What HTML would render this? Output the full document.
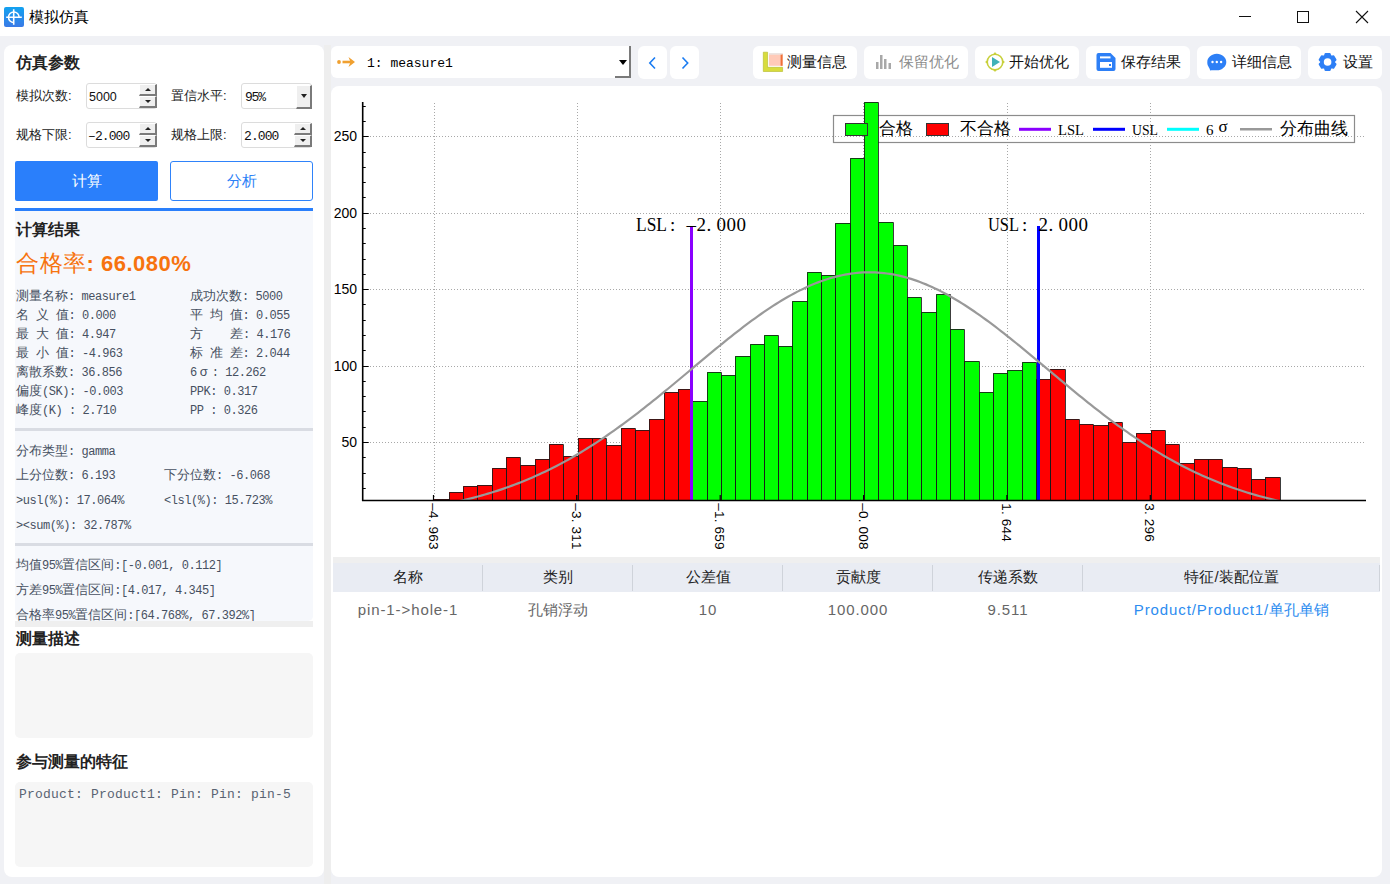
<!DOCTYPE html>
<html><head><meta charset="utf-8">
<style>
*{box-sizing:border-box}
html,body{margin:0;padding:0}
body{width:1390px;height:884px;overflow:hidden;position:relative;background:#f0f1f5;font-family:"Liberation Sans",sans-serif;color:#000}
.a{position:absolute}
.t{position:absolute;white-space:pre;line-height:1}
.chart{position:absolute;left:0;top:0}
.chart text{font-family:"Liberation Sans",sans-serif}
.yl{font-size:14px;fill:#000}
.xl{font-size:13.5px;fill:#000}
.lim{font-family:"Liberation Serif",serif !important;font-size:19px;fill:#000}
.lg{font-size:16.5px;fill:#000}
.lgs{font-family:"Liberation Serif",serif !important;font-size:15px;fill:#000}
/* left panel */
.m{font-family:"Liberation Mono",monospace;font-size:12px;letter-spacing:-0.45px;color:#465061}
.m b{font-weight:normal;font-family:"Liberation Sans",sans-serif;font-size:13px;letter-spacing:0}
.lbl{font-size:13px;color:#222}
.hd{font-size:15.5px;font-weight:bold;color:#222}
.spin{position:absolute;background:#fff;border:1px solid #dcdcdc;border-radius:3px}
.sbtn{position:absolute;background:#efefef;border-right:2px solid #7a7a7a;border-bottom:2px solid #7a7a7a;border-top:1px solid #fff;border-left:1px solid #fff}
.tri-up{position:absolute;width:0;height:0;border-left:3px solid transparent;border-right:3px solid transparent;border-bottom:3px solid #222;margin-left:1px;margin-top:1px}
.tri-dn{position:absolute;width:0;height:0;border-left:3px solid transparent;border-right:3px solid transparent;border-top:3px solid #222;margin-left:1px;margin-top:0px}
.tb{position:absolute;top:46px;height:33px;background:#fff;border-radius:6px}
.tbt{position:absolute;top:8px;font-size:15px;line-height:17px;color:#111;white-space:pre}
.th{position:absolute;top:562px;height:29px;font-size:15px;line-height:29px;text-align:center;color:#222}
.td{position:absolute;top:598px;height:24px;font-size:15px;line-height:24px;text-align:center;color:#666;letter-spacing:0.9px}
.td b{font-weight:normal;letter-spacing:0}
</style></head><body>
<!-- title bar -->
<div class="a" style="left:0;top:0;width:1390px;height:36px;background:#fff"></div>
<svg class="a" style="left:4px;top:7px" width="20" height="20" viewBox="0 0 20 20">
<defs><linearGradient id="ig" x1="0" y1="0" x2="0" y2="1"><stop offset="0" stop-color="#12a2f0"/><stop offset="1" stop-color="#3a7ae6"/></linearGradient></defs>
<rect x="0" y="0" width="20" height="20" rx="2" fill="url(#ig)"/>
<path d="M9.7 2.2V17.8M2.2 10.3H17.8" stroke="#fff" stroke-width="1.6"/>
<path d="M9.8 15.6A5.3 5.3 0 1 1 15.1 10.3" fill="none" stroke="#fff" stroke-width="1.5"/>
</svg>
<div class="t" style="left:29px;top:9px;font-size:15px;color:#000">模拟仿真</div>
<svg class="a" style="left:1230px;top:5px" width="150" height="26" viewBox="1230 5 150 26">
<path d="M1239 16.5H1251" stroke="#111" stroke-width="1"/>
<rect x="1297.5" y="11.5" width="11" height="11" fill="none" stroke="#111" stroke-width="1"/>
<path d="M1356 11L1368 23M1368 11L1356 23" stroke="#111" stroke-width="1.1"/>
</svg>

<!-- left panel -->
<div class="a" style="left:4px;top:45px;width:320px;height:832px;background:#fff;border-radius:8px"></div>
<div class="a" style="left:324px;top:45px;width:7px;height:839px;background:#eeeeee"></div>
<div class="t hd" style="left:16px;top:55px">仿真参数</div>

<div class="t lbl" style="left:16px;top:89px">模拟次数:</div>
<div class="spin" style="left:86px;top:83px;width:71px;height:26px"></div>
<div class="t" style="left:89px;top:91px;font-size:12.5px;font-family:'Liberation Sans',sans-serif;color:#111">5000</div>
<div class="sbtn" style="left:139px;top:84px;width:18px;height:12px"></div>
<div class="tri-up" style="left:144px;top:87px"></div>
<div class="sbtn" style="left:139px;top:96px;width:18px;height:12px"></div>
<div class="tri-dn" style="left:144px;top:100px"></div>

<div class="t lbl" style="left:171px;top:89px">置信水平:</div>
<div class="spin" style="left:241px;top:83px;width:71px;height:26px"></div>
<div class="t m" style="left:245px;top:91px;font-size:13px;letter-spacing:-1.2px;color:#111">95%</div>
<div class="sbtn" style="left:296px;top:85px;width:16px;height:24px"></div>
<div class="tri-dn" style="left:300px;top:94px;border-left-width:3.5px;border-right-width:3.5px;border-top-width:4px"></div>

<div class="t lbl" style="left:16px;top:128px">规格下限:</div>
<div class="spin" style="left:86px;top:122px;width:71px;height:26px"></div>
<div class="t m" style="left:88px;top:130px;font-size:13px;color:#111;letter-spacing:-0.9px">–2.000</div>
<div class="sbtn" style="left:139px;top:123px;width:18px;height:12px"></div>
<div class="tri-up" style="left:144px;top:126px"></div>
<div class="sbtn" style="left:139px;top:135px;width:18px;height:12px"></div>
<div class="tri-dn" style="left:144px;top:139px"></div>

<div class="t lbl" style="left:171px;top:128px">规格上限:</div>
<div class="spin" style="left:241px;top:122px;width:71px;height:26px"></div>
<div class="t m" style="left:244px;top:130px;font-size:13px;color:#111;letter-spacing:-0.9px">2.000</div>
<div class="sbtn" style="left:294px;top:123px;width:18px;height:12px"></div>
<div class="tri-up" style="left:299px;top:126px"></div>
<div class="sbtn" style="left:294px;top:135px;width:18px;height:12px"></div>
<div class="tri-dn" style="left:299px;top:139px"></div>

<div class="a" style="left:15px;top:161px;width:143px;height:40px;background:#2a7ffb;border-radius:2px"></div>
<div class="t" style="left:15px;top:173px;width:143px;text-align:center;font-size:15px;color:#fff">计算</div>
<div class="a" style="left:170px;top:161px;width:143px;height:40px;background:#fff;border:1.5px solid #2f83fa;border-radius:3px"></div>
<div class="t" style="left:170px;top:173px;width:143px;text-align:center;font-size:15px;color:#2a80f6">分析</div>

<div class="a" style="left:15px;top:208px;width:298px;height:3px;background:#2a7ffb"></div>
<div class="a" style="left:15px;top:211px;width:298px;height:410px;background:#f6f8fc;border-radius:0 0 5px 5px"></div>
<div class="t hd" style="left:16px;top:222px">计算结果</div>
<div class="t" style="left:16px;top:252px;font-size:23px;color:#f7730e;letter-spacing:0.5px">合格率<span style="font-weight:bold;font-size:22px">: 66.080%</span></div>

<div class="t m" style="left:16px;top:289px"><b>测量名称</b>: measure1</div>
<div class="t m" style="left:16px;top:308px"><b>名</b> <b>义</b> <b>值</b>: 0.000</div>
<div class="t m" style="left:16px;top:327px"><b>最</b> <b>大</b> <b>值</b>: 4.947</div>
<div class="t m" style="left:16px;top:346px"><b>最</b> <b>小</b> <b>值</b>: -4.963</div>
<div class="t m" style="left:16px;top:365px"><b>离散系数</b>: 36.856</div>
<div class="t m" style="left:16px;top:384px"><b>偏度</b>(SK): -0.003</div>
<div class="t m" style="left:16px;top:403px"><b>峰度</b>(K) : 2.710</div>

<div class="t m" style="left:190px;top:289px"><b>成功次数</b>: 5000</div>
<div class="t m" style="left:190px;top:308px"><b>平</b> <b>均</b> <b>值</b>: 0.055</div>
<div class="t m" style="left:190px;top:327px"><b>方</b>    <b>差</b>: 4.176</div>
<div class="t m" style="left:190px;top:346px"><b>标</b> <b>准</b> <b>差</b>: 2.044</div>
<div class="t m" style="left:190px;top:365px">6<b style="padding:0 4px 0 3px">σ</b>: 12.262</div>
<div class="t m" style="left:190px;top:384px"><b>&#8203;</b>PPK: 0.317</div>
<div class="t m" style="left:190px;top:403px"><b>&#8203;</b>PP : 0.326</div>

<div class="a" style="left:15px;top:428px;width:298px;height:3px;background:#d9dce3"></div>
<div class="t m" style="left:16px;top:444px"><b>分布类型</b>: gamma</div>
<div class="t m" style="left:16px;top:468px"><b>上分位数</b>: 6.193</div>
<div class="t m" style="left:164px;top:468px"><b>下分位数</b>: -6.068</div>
<div class="t m" style="left:16px;top:493px"><b>&#8203;</b>&gt;usl(%): 17.064%</div>
<div class="t m" style="left:164px;top:493px"><b>&#8203;</b>&lt;lsl(%): 15.723%</div>
<div class="t m" style="left:16px;top:518px"><b>&#8203;</b>&gt;&lt;sum(%): 32.787%</div>
<div class="a" style="left:15px;top:543px;width:298px;height:3px;background:#d9dce3"></div>
<div class="t m" style="left:16px;top:558px"><b>均值</b>95%<b>置信区间</b>:[-0.001, 0.112]</div>
<div class="t m" style="left:16px;top:583px"><b>方差</b>95%<b>置信区间</b>:[4.017, 4.345]</div>
<div class="t m" style="left:16px;top:608px"><b>合格率</b>95%<b>置信区间</b>:[64.768%, 67.392%]</div>
<div class="a" style="left:15px;top:621px;width:298px;height:6px;background:#efefef"></div>

<div class="t hd" style="left:16px;top:631px">测量描述</div>
<div class="a" style="left:15px;top:653px;width:298px;height:85px;background:#f6f6f6;border-radius:5px"></div>
<div class="t hd" style="left:16px;top:754px">参与测量的特征</div>
<div class="a" style="left:15px;top:782px;width:298px;height:85px;background:#f6f6f6;border-radius:5px"></div>
<div class="t" style="left:19px;top:788px;font-family:'Liberation Mono',monospace;font-size:13px;letter-spacing:0.2px;color:#5a6472">Product: Product1: Pin: Pin: pin-5</div>

<!-- right top bar -->
<div class="a" style="left:331px;top:46px;width:300px;height:32px;background:#fff;border-radius:6px 0 0 6px"></div>
<div class="a" style="left:629px;top:46px;width:2px;height:32px;background:#7a7a7a"></div>
<div class="a" style="left:615px;top:76px;width:16px;height:2px;background:#7a7a7a"></div>
<div class="tri-dn" style="left:618px;top:60px;border-left-width:4px;border-right-width:4px;border-top-width:5px;border-top-color:#000"></div>
<svg class="a" style="left:334px;top:55px" width="24" height="14" viewBox="0 0 24 14">
<circle cx="5" cy="7" r="1.9" fill="#f0a030"/>
<path d="M8.5 7H18" stroke="#f0a030" stroke-width="2.6" fill="none"/><path d="M14.5 2L21 7L14.5 12L16.5 7Z" fill="#f0a030"/>
</svg>
<div class="t" style="left:367px;top:57px;font-family:'Liberation Mono',monospace;font-size:13px;letter-spacing:0px;color:#000">1: measure1</div>

<div class="a" style="left:638px;top:46px;width:29px;height:33px;background:#fff;border-radius:6px"></div>
<div class="a" style="left:670px;top:46px;width:29px;height:33px;background:#fff;border-radius:6px"></div>
<svg class="a" style="left:638px;top:46px" width="62" height="33" viewBox="638 46 62 33">
<path d="M655 57.5L649.8 63L655 68.5" stroke="#1a7cf2" stroke-width="1.6" fill="none"/>
<path d="M682.5 57.5L687.7 63L682.5 68.5" stroke="#1a7cf2" stroke-width="1.6" fill="none"/>
</svg>

<div class="tb" style="left:753px;width:104px"></div>
<div class="tb" style="left:864px;width:104px"></div>
<div class="tb" style="left:975px;width:104px"></div>
<div class="tb" style="left:1086px;width:104px"></div>
<div class="tb" style="left:1197px;width:104px"></div>
<div class="tb" style="left:1308px;width:74px"></div>
<svg class="a" style="left:0;top:0" width="1390" height="90" viewBox="0 0 1390 90">
<!-- ruler icon -->
<path d="M763.3 52.2H767.6V67.3H782.6V71.5H763.3Z" fill="#d8dc3c" stroke="#b4b828" stroke-width="0.6"/>
<rect x="769" y="53.2" width="13.6" height="12.6" fill="#ffcab8"/>
<rect x="780.6" y="54" width="2" height="11.8" fill="#f07038"/>
<rect x="769" y="53.2" width="13.6" height="1.4" fill="#e8e8e8"/>
<!-- bars icon -->
<g fill="#a8a8a8"><rect x="876" y="62" width="2.5" height="7"/><rect x="880" y="55" width="2.5" height="14"/><rect x="884" y="59" width="2.5" height="10"/><rect x="888.5" y="63" width="2.5" height="6"/></g>
<!-- play icon -->
<circle cx="995" cy="62" r="7.8" fill="none" stroke="#c8d03c" stroke-width="1.6"/>
<g fill="#c8d03c"><circle cx="995" cy="53.8" r="1.3"/><circle cx="995" cy="70.2" r="1.3"/><circle cx="986.8" cy="62" r="1.3"/><circle cx="1003.2" cy="62" r="1.3"/></g>
<path d="M992 57V67L1000 62Z" fill="#3fb1b8"/>
<!-- save icon -->
<path d="M1098.5 53H1110.5L1115.5 58V69Q1115.5 71 1113.5 71H1098.5Q1096.5 71 1096.5 69V55Q1096.5 53 1098.5 53Z" fill="#2d7ff6"/>
<rect x="1100" y="56.4" width="10.5" height="2" fill="#fff"/><rect x="1100" y="62" width="12" height="5.8" fill="#fff"/>
<rect x="1109" y="64" width="2" height="2" fill="#2d7ff6"/>
<!-- chat icon -->
<path d="M1216.8 53.7C1222 53.7 1226.3 57.4 1226.3 62C1226.3 66.6 1222 70.3 1216.8 70.3C1214.8 70.3 1212.5 69.8 1210 70.5C1210.5 69.5 1208.3 67 1207.5 64.5C1207.3 63.7 1207.3 62.8 1207.3 62C1207.3 57.4 1211.6 53.7 1216.8 53.7Z" fill="#2d7ff6"/>
<g fill="#fff"><circle cx="1212.5" cy="62" r="1.2"/><circle cx="1216.8" cy="62" r="1.2"/><circle cx="1221.1" cy="62" r="1.2"/></g>
<!-- gear -->
<g transform="translate(1327.6,62)"><path d="M-2.69 -6.03L-2.11 -7.92L2.11 -7.92L2.69 -6.03L3.87 -5.34L5.81 -5.79L7.92 -2.14L6.56 -0.68L6.56 0.68L7.92 2.14L5.81 5.79L3.87 5.34L2.69 6.03L2.11 7.92L-2.11 7.92L-2.69 6.03L-3.87 5.34L-5.81 5.79L-7.92 2.14L-6.56 0.68L-6.56 -0.68L-7.92 -2.14L-5.81 -5.79L-3.87 -5.34Z" fill="#2d7ff6" stroke="#2d7ff6" stroke-width="2" stroke-linejoin="round"/><circle r="3.8" fill="#fff"/></g>
</svg>
<div class="tbt" style="left:787px;top:53px">测量信息</div>
<div class="tbt" style="left:899px;top:53px;color:#8c8c8c">保留优化</div>
<div class="tbt" style="left:1009px;top:53px">开始优化</div>
<div class="tbt" style="left:1121px;top:53px">保存结果</div>
<div class="tbt" style="left:1232px;top:53px">详细信息</div>
<div class="tbt" style="left:1343px;top:53px">设置</div>

<!-- main panel -->
<div class="a" style="left:331px;top:86px;width:1051px;height:791px;background:#fff;border-radius:8px"></div>
<svg class="chart" width="1390" height="884" viewBox="0 0 1390 884">
<defs><clipPath id="pa"><rect x="363" y="90" width="1010" height="410"/></clipPath></defs>
<path d="M364 442.5H1366M364 366.5H1366M364 289.5H1366M364 213.5H1366M364 136.5H1366M434.5 103V499M577.5 103V499M720.5 103V499M863.5 103V499M1007.5 103V499M1150.5 103V499" stroke="#a8a8a8" stroke-width="1" stroke-dasharray="1 2" fill="none"/>
<rect x="833.5" y="115.5" width="521" height="27" fill="none" stroke="#8c8c8c" stroke-width="1.2"/>
<g><rect x="434" y="499" width="15" height="1.0" fill="#ff0000"/><rect x="449" y="492" width="14" height="8.0" fill="#ff0000"/><rect x="463" y="486" width="14" height="14.0" fill="#ff0000"/><rect x="477" y="485" width="15" height="15.0" fill="#ff0000"/><rect x="492" y="468" width="14" height="32.0" fill="#ff0000"/><rect x="506" y="457" width="14" height="43.0" fill="#ff0000"/><rect x="520" y="465" width="15" height="35.0" fill="#ff0000"/><rect x="535" y="459" width="14" height="41.0" fill="#ff0000"/><rect x="549" y="444" width="14" height="56.0" fill="#ff0000"/><rect x="563" y="456" width="15" height="44.0" fill="#ff0000"/><rect x="578" y="438" width="14" height="62.0" fill="#ff0000"/><rect x="592" y="438" width="14" height="62.0" fill="#ff0000"/><rect x="606" y="445" width="15" height="55.0" fill="#ff0000"/><rect x="621" y="428" width="14" height="72.0" fill="#ff0000"/><rect x="635" y="430" width="14" height="70.0" fill="#ff0000"/><rect x="649" y="419" width="15" height="81.0" fill="#ff0000"/><rect x="664" y="392" width="14" height="108.0" fill="#ff0000"/><rect x="678" y="389" width="14" height="111.0" fill="#ff0000"/><rect x="692" y="401" width="15" height="99.0" fill="#00ff00"/><rect x="707" y="372" width="14" height="128.0" fill="#00ff00"/><rect x="721" y="375" width="14" height="125.0" fill="#00ff00"/><rect x="735" y="356" width="15" height="144.0" fill="#00ff00"/><rect x="750" y="344" width="14" height="156.0" fill="#00ff00"/><rect x="764" y="335" width="14" height="165.0" fill="#00ff00"/><rect x="778" y="346" width="14" height="154.0" fill="#00ff00"/><rect x="792" y="301" width="15" height="199.0" fill="#00ff00"/><rect x="807" y="272" width="14" height="228.0" fill="#00ff00"/><rect x="821" y="275" width="14" height="225.0" fill="#00ff00"/><rect x="835" y="223" width="15" height="277.0" fill="#00ff00"/><rect x="850" y="158" width="14" height="342.0" fill="#00ff00"/><rect x="864" y="102" width="14" height="398.0" fill="#00ff00"/><rect x="878" y="222" width="15" height="278.0" fill="#00ff00"/><rect x="893" y="245" width="14" height="255.0" fill="#00ff00"/><rect x="907" y="297" width="14" height="203.0" fill="#00ff00"/><rect x="921" y="312" width="15" height="188.0" fill="#00ff00"/><rect x="936" y="294" width="14" height="206.0" fill="#00ff00"/><rect x="950" y="329" width="14" height="171.0" fill="#00ff00"/><rect x="964" y="361" width="15" height="139.0" fill="#00ff00"/><rect x="979" y="392" width="14" height="108.0" fill="#00ff00"/><rect x="993" y="373" width="14" height="127.0" fill="#00ff00"/><rect x="1007" y="370" width="15" height="130.0" fill="#00ff00"/><rect x="1022" y="362" width="14" height="138.0" fill="#00ff00"/><rect x="1036" y="379" width="14" height="121.0" fill="#ff0000"/><rect x="1050" y="369" width="15" height="131.0" fill="#ff0000"/><rect x="1065" y="419" width="14" height="81.0" fill="#ff0000"/><rect x="1079" y="424" width="14" height="76.0" fill="#ff0000"/><rect x="1093" y="425" width="15" height="75.0" fill="#ff0000"/><rect x="1108" y="422" width="14" height="78.0" fill="#ff0000"/><rect x="1122" y="442" width="14" height="58.0" fill="#ff0000"/><rect x="1136" y="433" width="15" height="67.0" fill="#ff0000"/><rect x="1151" y="430" width="14" height="70.0" fill="#ff0000"/><rect x="1165" y="444" width="14" height="56.0" fill="#ff0000"/><rect x="1179" y="463" width="15" height="37.0" fill="#ff0000"/><rect x="1194" y="459" width="14" height="41.0" fill="#ff0000"/><rect x="1208" y="459" width="14" height="41.0" fill="#ff0000"/><rect x="1222" y="467" width="15" height="33.0" fill="#ff0000"/><rect x="1237" y="468" width="14" height="32.0" fill="#ff0000"/><rect x="1251" y="479" width="14" height="21.0" fill="#ff0000"/><rect x="1265" y="477" width="15" height="23.0" fill="#ff0000"/></g>
<path d="M434.5 500.0V499.5H449.5V500.0M449.5 500.0V492.5H463.5V500.0M463.5 500.0V486.5H477.5V500.0M477.5 500.0V485.5H492.5V500.0M492.5 500.0V468.5H506.5V500.0M506.5 500.0V457.5H520.5V500.0M520.5 500.0V465.5H535.5V500.0M535.5 500.0V459.5H549.5V500.0M549.5 500.0V444.5H563.5V500.0M563.5 500.0V456.5H578.5V500.0M578.5 500.0V438.5H592.5V500.0M592.5 500.0V438.5H606.5V500.0M606.5 500.0V445.5H621.5V500.0M621.5 500.0V428.5H635.5V500.0M635.5 500.0V430.5H649.5V500.0M649.5 500.0V419.5H664.5V500.0M664.5 500.0V392.5H678.5V500.0M678.5 500.0V389.5H692.5V500.0M692.5 500.0V401.5H707.5V500.0M707.5 500.0V372.5H721.5V500.0M721.5 500.0V375.5H735.5V500.0M735.5 500.0V356.5H750.5V500.0M750.5 500.0V344.5H764.5V500.0M764.5 500.0V335.5H778.5V500.0M778.5 500.0V346.5H792.5V500.0M792.5 500.0V301.5H807.5V500.0M807.5 500.0V272.5H821.5V500.0M821.5 500.0V275.5H835.5V500.0M835.5 500.0V223.5H850.5V500.0M850.5 500.0V158.5H864.5V500.0M864.5 500.0V102.5H878.5V500.0M878.5 500.0V222.5H893.5V500.0M893.5 500.0V245.5H907.5V500.0M907.5 500.0V297.5H921.5V500.0M921.5 500.0V312.5H936.5V500.0M936.5 500.0V294.5H950.5V500.0M950.5 500.0V329.5H964.5V500.0M964.5 500.0V361.5H979.5V500.0M979.5 500.0V392.5H993.5V500.0M993.5 500.0V373.5H1007.5V500.0M1007.5 500.0V370.5H1022.5V500.0M1022.5 500.0V362.5H1036.5V500.0M1036.5 500.0V379.5H1050.5V500.0M1050.5 500.0V369.5H1065.5V500.0M1065.5 500.0V419.5H1079.5V500.0M1079.5 500.0V424.5H1093.5V500.0M1093.5 500.0V425.5H1108.5V500.0M1108.5 500.0V422.5H1122.5V500.0M1122.5 500.0V442.5H1136.5V500.0M1136.5 500.0V433.5H1151.5V500.0M1151.5 500.0V430.5H1165.5V500.0M1165.5 500.0V444.5H1179.5V500.0M1179.5 500.0V463.5H1194.5V500.0M1194.5 500.0V459.5H1208.5V500.0M1208.5 500.0V459.5H1222.5V500.0M1222.5 500.0V467.5H1237.5V500.0M1237.5 500.0V468.5H1251.5V500.0M1251.5 500.0V479.5H1265.5V500.0M1265.5 500.0V477.5H1280.5V500.0" fill="none" stroke="#1a1a1a" stroke-opacity="0.85" stroke-width="1"/>
<rect x="690" y="226" width="3" height="274" fill="#8a00ff"/>
<rect x="1037" y="226" width="3" height="274" fill="#0000ff"/>
<polyline points="362.0,514.17 365.0,513.97 368.0,513.75 371.0,513.52 374.0,513.29 377.0,513.05 380.0,512.79 383.0,512.53 386.0,512.25 389.0,511.96 392.0,511.66 395.0,511.35 398.0,511.03 401.0,510.69 404.0,510.35 407.0,509.98 410.0,509.61 413.0,509.22 416.0,508.81 419.0,508.40 422.0,507.96 425.0,507.51 428.0,507.04 431.0,506.56 434.0,506.06 437.0,505.54 440.0,505.01 443.0,504.45 446.0,503.88 449.0,503.29 452.0,502.68 455.0,502.05 458.0,501.39 461.0,500.72 464.0,500.03 467.0,499.31 470.0,498.57 473.0,497.81 476.0,497.03 479.0,496.22 482.0,495.38 485.0,494.53 488.0,493.65 491.0,492.74 494.0,491.81 497.0,490.85 500.0,489.86 503.0,488.85 506.0,487.81 509.0,486.75 512.0,485.65 515.0,484.53 518.0,483.38 521.0,482.20 524.0,480.99 527.0,479.75 530.0,478.48 533.0,477.18 536.0,475.86 539.0,474.50 542.0,473.11 545.0,471.69 548.0,470.24 551.0,468.76 554.0,467.24 557.0,465.70 560.0,464.12 563.0,462.52 566.0,460.88 569.0,459.21 572.0,457.51 575.0,455.78 578.0,454.02 581.0,452.23 584.0,450.40 587.0,448.55 590.0,446.67 593.0,444.75 596.0,442.81 599.0,440.84 602.0,438.84 605.0,436.81 608.0,434.75 611.0,432.67 614.0,430.56 617.0,428.42 620.0,426.25 623.0,424.06 626.0,421.85 629.0,419.61 632.0,417.35 635.0,415.07 638.0,412.76 641.0,410.44 644.0,408.09 647.0,405.73 650.0,403.34 653.0,400.95 656.0,398.53 659.0,396.10 662.0,393.65 665.0,391.20 668.0,388.73 671.0,386.25 674.0,383.76 677.0,381.27 680.0,378.76 683.0,376.26 686.0,373.74 689.0,371.23 692.0,368.71 695.0,366.20 698.0,363.68 701.0,361.17 704.0,358.67 707.0,356.17 710.0,353.68 713.0,351.19 716.0,348.72 719.0,346.26 722.0,343.82 725.0,341.39 728.0,338.97 731.0,336.58 734.0,334.20 737.0,331.85 740.0,329.52 743.0,327.22 746.0,324.95 749.0,322.70 752.0,320.48 755.0,318.29 758.0,316.14 761.0,314.02 764.0,311.94 767.0,309.90 770.0,307.90 773.0,305.93 776.0,304.01 779.0,302.14 782.0,300.31 785.0,298.53 788.0,296.79 791.0,295.11 794.0,293.47 797.0,291.89 800.0,290.36 803.0,288.89 806.0,287.47 809.0,286.11 812.0,284.81 815.0,283.57 818.0,282.39 821.0,281.27 824.0,280.21 827.0,279.22 830.0,278.29 833.0,277.42 836.0,276.62 839.0,275.89 842.0,275.22 845.0,274.62 848.0,274.09 851.0,273.63 854.0,273.23 857.0,272.91 860.0,272.65 863.0,272.46 866.0,272.35 869.0,272.30 872.0,272.32 875.0,272.42 878.0,272.58 881.0,272.81 884.0,273.12 887.0,273.49 890.0,273.93 893.0,274.44 896.0,275.01 899.0,275.66 902.0,276.37 905.0,277.15 908.0,277.99 911.0,278.90 914.0,279.87 917.0,280.91 920.0,282.01 923.0,283.17 926.0,284.39 929.0,285.67 932.0,287.01 935.0,288.41 938.0,289.86 941.0,291.37 944.0,292.94 947.0,294.55 950.0,296.22 953.0,297.94 956.0,299.71 959.0,301.52 962.0,303.38 965.0,305.29 968.0,307.24 971.0,309.23 974.0,311.26 977.0,313.33 980.0,315.43 983.0,317.57 986.0,319.75 989.0,321.95 992.0,324.19 995.0,326.46 998.0,328.75 1001.0,331.07 1004.0,333.42 1007.0,335.78 1010.0,338.17 1013.0,340.58 1016.0,343.00 1019.0,345.44 1022.0,347.90 1025.0,350.37 1028.0,352.85 1031.0,355.34 1034.0,357.83 1037.0,360.34 1040.0,362.85 1043.0,365.36 1046.0,367.87 1049.0,370.39 1052.0,372.91 1055.0,375.42 1058.0,377.93 1061.0,380.43 1064.0,382.93 1067.0,385.42 1070.0,387.90 1073.0,390.38 1076.0,392.84 1079.0,395.29 1082.0,397.72 1085.0,400.14 1088.0,402.55 1091.0,404.93 1094.0,407.31 1097.0,409.66 1100.0,411.99 1103.0,414.30 1106.0,416.59 1109.0,418.86 1112.0,421.11 1115.0,423.33 1118.0,425.53 1121.0,427.70 1124.0,429.85 1127.0,431.97 1130.0,434.06 1133.0,436.13 1136.0,438.17 1139.0,440.18 1142.0,442.16 1145.0,444.11 1148.0,446.03 1151.0,447.93 1154.0,449.79 1157.0,451.62 1160.0,453.43 1163.0,455.20 1166.0,456.94 1169.0,458.65 1172.0,460.33 1175.0,461.98 1178.0,463.59 1181.0,465.18 1184.0,466.73 1187.0,468.25 1190.0,469.75 1193.0,471.21 1196.0,472.64 1199.0,474.04 1202.0,475.41 1205.0,476.74 1208.0,478.05 1211.0,479.33 1214.0,480.58 1217.0,481.80 1220.0,482.99 1223.0,484.15 1226.0,485.28 1229.0,486.38 1232.0,487.46 1235.0,488.51 1238.0,489.53 1241.0,490.52 1244.0,491.49 1247.0,492.43 1250.0,493.35 1253.0,494.24 1256.0,495.10 1259.0,495.94 1262.0,496.76 1265.0,497.55 1268.0,498.32 1271.0,499.07 1274.0,499.79 1277.0,500.49 1280.0,501.17 1283.0,501.83 1286.0,502.47 1289.0,503.09 1292.0,503.69 1295.0,504.27 1298.0,504.83 1301.0,505.37 1304.0,505.89 1307.0,506.40 1310.0,506.89 1313.0,507.36 1316.0,507.81 1319.0,508.25 1322.0,508.68 1325.0,509.09 1328.0,509.48 1331.0,509.86 1334.0,510.23 1337.0,510.58 1340.0,510.92 1343.0,511.25 1346.0,511.56 1349.0,511.86 1352.0,512.15 1355.0,512.43 1358.0,512.70 1361.0,512.96 1364.0,513.21" fill="none" stroke="#999999" stroke-width="2.2" clip-path="url(#pa)"/>
<path d="M362.7 102V500.5H1366" stroke="#000" stroke-width="1.6" fill="none"/>
<path d="M362.7 488.5h3M362.7 473.5h3M362.7 457.5h3M362.7 442.5h6M362.7 427.5h3M362.7 411.5h3M362.7 396.5h3M362.7 381.5h3M362.7 366.5h6M362.7 350.5h3M362.7 335.5h3M362.7 320.5h3M362.7 304.5h3M362.7 289.5h6M362.7 274.5h3M362.7 259.5h3M362.7 243.5h3M362.7 228.5h3M362.7 213.5h6M362.7 197.5h3M362.7 182.5h3M362.7 167.5h3M362.7 152.5h3M362.7 136.5h6M362.7 121.5h3M362.7 106.5h3M433.5 500v-5M576.8 500v-5M720.2 500v-5M863.6 500v-5M1006.9 500v-5M1150.3 500v-5" stroke="#000" stroke-width="1.2" fill="none"/>
<text x="357" y="447.0" class="yl" text-anchor="end">50</text><text x="357" y="370.5" class="yl" text-anchor="end">100</text><text x="357" y="294.1" class="yl" text-anchor="end">150</text><text x="357" y="217.7" class="yl" text-anchor="end">200</text><text x="357" y="141.3" class="yl" text-anchor="end">250</text>
<text transform="translate(428.5,503) rotate(90)" class="xl" x="0.3 8.1 15.8 23.6 31.3 39.0">–4.963</text><text transform="translate(571.8,503) rotate(90)" class="xl" x="0.3 8.1 15.8 23.6 31.3 39.0">–3.311</text><text transform="translate(715.2,503) rotate(90)" class="xl" x="0.3 8.1 15.8 23.6 31.3 39.0">–1.659</text><text transform="translate(858.6,503) rotate(90)" class="xl" x="0.3 8.1 15.8 23.6 31.3 39.0">–0.008</text><text transform="translate(1001.9,503) rotate(90)" class="xl" x="0.3 8.1 15.8 23.6 31.3">1.644</text><text transform="translate(1145.3,503) rotate(90)" class="xl" x="0.3 8.1 15.8 23.6 31.3">3.296</text>
<text x="636" y="231" class="lim" textLength="31" lengthAdjust="spacingAndGlyphs">LSL</text><text x="670" y="231" class="lim">:</text><text x="686.5 696.5 706.5 716.5 726.5 736.5" y="231" class="lim">–2.000</text>
<text x="988" y="231" class="lim" textLength="31" lengthAdjust="spacingAndGlyphs">USL</text><text x="1022" y="231" class="lim">:</text><text x="1038.5 1048.5 1058.5 1068.5 1078.5" y="231" class="lim">2.000</text>
<rect x="845.5" y="123.5" width="22" height="12" fill="#00ff00" stroke="#333" stroke-width="1"/>
<text x="879" y="134" class="lg">合格</text>
<rect x="926.5" y="123.5" width="22" height="12" fill="#ff0000" stroke="#333" stroke-width="1"/>
<text x="960" y="134" class="lg">不合格</text>
<rect x="1019" y="127.8" width="32" height="3" fill="#8a00ff"/>
<text x="1058" y="134.5" class="lgs" textLength="26" lengthAdjust="spacingAndGlyphs">LSL</text>
<rect x="1093" y="127.8" width="32" height="3" fill="#0000ff"/>
<text x="1132" y="134.5" class="lgs" textLength="26" lengthAdjust="spacingAndGlyphs">USL</text>
<rect x="1167" y="127.8" width="32" height="3" fill="#00ffff"/>
<text x="1206" y="134.5" class="lgs">6</text><text x="1218.5" y="131.5" class="lgs" style="font-size:17px">σ</text>
<rect x="1240" y="128" width="32" height="2.5" fill="#999"/>
<text x="1280" y="134" class="lg">分布曲线</text>
</svg>
<!-- table -->
<div class="a" style="left:333px;top:557px;width:1047px;height:6px;background:#efefef"></div>
<div class="a" style="left:333px;top:563px;width:1047px;height:29px;background:#e9ecf3"></div>
<div class="a" style="left:482px;top:565px;width:1px;height:26px;background:#cfd3da"></div>
<div class="a" style="left:632px;top:565px;width:1px;height:26px;background:#cfd3da"></div>
<div class="a" style="left:782px;top:565px;width:1px;height:26px;background:#cfd3da"></div>
<div class="a" style="left:932px;top:565px;width:1px;height:26px;background:#cfd3da"></div>
<div class="a" style="left:1082px;top:565px;width:1px;height:26px;background:#cfd3da"></div>
<div class="a" style="left:1379px;top:565px;width:1px;height:26px;background:#cfd3da"></div>
<div class="th" style="left:333px;width:150px">名称</div>
<div class="th" style="left:483px;width:150px">类别</div>
<div class="th" style="left:633px;width:150px">公差值</div>
<div class="th" style="left:783px;width:150px">贡献度</div>
<div class="th" style="left:933px;width:150px">传递系数</div>
<div class="th" style="left:1083px;width:297px">特征/装配位置</div>
<div class="td" style="left:333px;width:150px">pin-1-&gt;hole-1</div>
<div class="td" style="left:483px;width:150px"><b>孔销浮动</b></div>
<div class="td" style="left:633px;width:150px">10</div>
<div class="td" style="left:783px;width:150px">100.000</div>
<div class="td" style="left:933px;width:150px">9.511</div>
<div class="td" style="left:1083px;width:297px;color:#2d8cf0">Product/Product1/<b>单孔单销</b></div>
</body></html>
